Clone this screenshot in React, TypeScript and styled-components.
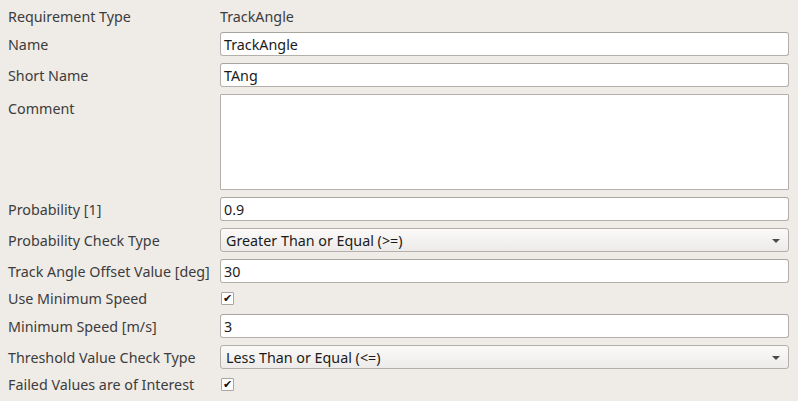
import React from "react";
import styled, { createGlobalStyle } from "styled-components";

const Global = createGlobalStyle`
  html, body { margin: 0; padding: 0; background: #efebe7; }
  body { font-family: "Noto Sans", "DejaVu Sans", sans-serif; font-size: 14.3px; color: #3c3c3c; }
  * { box-sizing: border-box; }
`;

const Form = styled.div`
  display: grid;
  grid-template-columns: 212px 569px;
  column-gap: 0;
  row-gap: 7px;
  padding: 8px 9px 8px 8px;
  width: 798px;
  height: 401px;
`;

const Label = styled.div<{ $top?: boolean }>`
  display: flex;
  align-items: ${(p) => (p.$top ? "flex-start" : "center")};
  padding-top: ${(p) => (p.$top ? "6px" : "0")};
  white-space: nowrap;
  line-height: 17px;
`;

const Value = styled.div`
  display: flex;
  align-items: center;
  height: 17px;
  color: #3c3c3c;
`;

const Input = styled.div`
  height: 24px;
  background: #ffffff;
  border: 1px solid #b3afaa;
  border-top-color: #a8a4a0;
  border-radius: 3px;
  padding: 0 3px;
  display: flex;
  align-items: center;
  color: #1b1b1b;
  line-height: 17px;
`;

const Area = styled.div`
  height: 96px;
  background: #ffffff;
  border: 1px solid #b3afaa;
  border-radius: 1px;
`;

const Combo = styled.div`
  height: 24px;
  border: 1px solid #b3afaa;
  border-radius: 3px;
  background: linear-gradient(#fbfaf9, #ecebe9);
  display: flex;
  align-items: center;
  justify-content: space-between;
  padding: 0 8px 0 5px;
  color: #1b1b1b;
`;

const Arrow = styled.span`
  width: 0;
  height: 0;
  border-left: 4px solid transparent;
  border-right: 4px solid transparent;
  border-top: 4px solid #4a4a4a;
  margin-top: 1px;
`;

const CheckRow = styled.div`
  height: 17px;
  display: flex;
  align-items: center;
`;

const Box = styled.div`
  width: 13px;
  height: 13px;
  margin-left: 1px;
  background: #ffffff;
  border: 1px solid #a9a5a0;
  border-radius: 1px;
  display: flex;
  align-items: center;
  justify-content: center;
  font-family: "DejaVu Sans", sans-serif;
  font-size: 11px;
  font-weight: bold;
  line-height: 1;
  color: #111;
`;

const CheckLabel = styled(Label)`
  height: 17px;
`;

export default function App() {
  return (
    <>
      <Global />
      <Form>
        <Label>Requirement Type</Label>
        <Value>TrackAngle</Value>

        <Label>Name</Label>
        <Input>TrackAngle</Input>

        <Label>Short Name</Label>
        <Input>TAng</Input>

        <Label $top>Comment</Label>
        <Area />

        <Label>Probability [1]</Label>
        <Input>0.9</Input>

        <Label>Probability Check Type</Label>
        <Combo>
          <span>Greater Than or Equal (&gt;=)</span>
          <Arrow />
        </Combo>

        <Label>Track Angle Offset Value [deg]</Label>
        <Input>30</Input>

        <CheckLabel>Use Minimum Speed</CheckLabel>
        <CheckRow>
          <Box>✔</Box>
        </CheckRow>

        <Label>Minimum Speed [m/s]</Label>
        <Input>3</Input>

        <Label>Threshold Value Check Type</Label>
        <Combo>
          <span>Less Than or Equal (&lt;=)</span>
          <Arrow />
        </Combo>

        <CheckLabel>Failed Values are of Interest</CheckLabel>
        <CheckRow>
          <Box>✔</Box>
        </CheckRow>
      </Form>
    </>
  );
}
